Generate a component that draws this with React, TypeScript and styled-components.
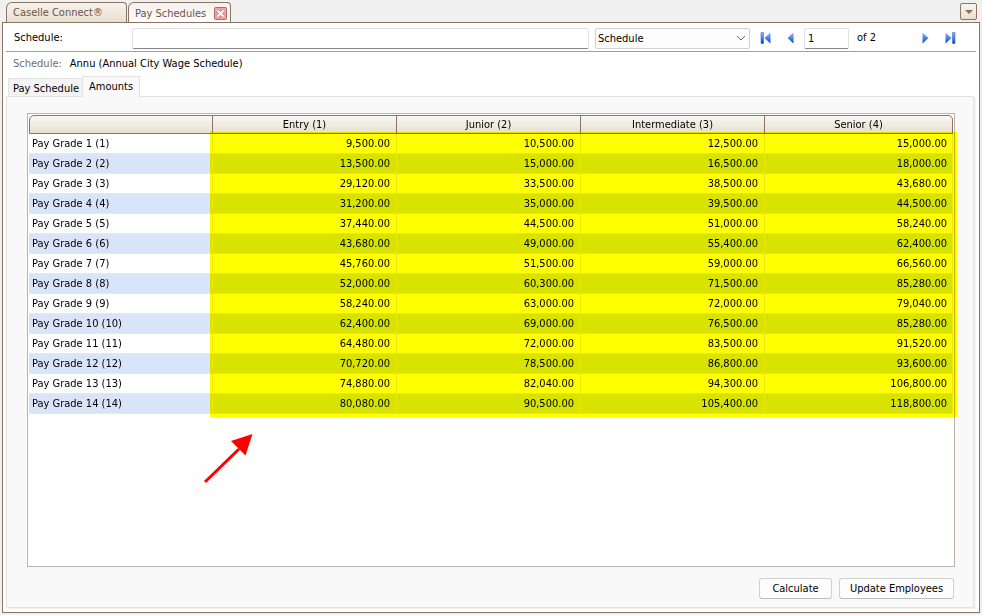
import React from 'react';
import styled, { createGlobalStyle, css } from 'styled-components';

const BROWN = '#8c7364';

const GlobalStyle = createGlobalStyle`
  *, *::before, *::after { box-sizing: border-box; }
  body {
    margin: 0;
    background: #f0f0f0;
    color: #000;
    font: 11px/14px Tahoma, "DejaVu Sans Condensed", "DejaVu Sans", sans-serif;
  }
  button, input, select { font: inherit; color: inherit; }
`;

const Window = styled.div`
  min-height: 100vh;
  display: flex;
  flex-direction: column;
  padding: 2px;
`;

const TabStrip = styled.header`
  display: flex;
  align-items: flex-end;
  height: 20px;
  padding: 0 3px 0 4px;
`;

const DocumentTab = styled.div<{ $active?: boolean; $width: number }>`
  display: flex;
  align-items: center;
  justify-content: space-between;
  width: ${p => p.$width}px;
  height: ${p => (p.$active ? 21 : 20)}px;
  padding: 1px 3px 0 6px;
  border: 1px solid ${BROWN};
  border-bottom: 0;
  border-radius: 6px 4px 0 0;
  background: ${p => (p.$active ? 'linear-gradient(#f4f0ee, #fff)' : 'linear-gradient(#f5f3ec, #e6e0cf)')};
  ${p => p.$active && css`margin: 0 0 -1px 1px;`}
`;

const TabTitle = styled.button`
  padding: 0;
  border: 0;
  background: none;
  color: #705148;
  white-space: nowrap;
`;

const CloseButton = styled.button`
  display: flex;
  padding: 0;
  border: 0;
  background: none;
`;

const TabMenuButton = styled.button`
  display: flex;
  align-items: center;
  justify-content: center;
  align-self: flex-start;
  width: 17px;
  height: 17px;
  margin: 1px 0 0 auto;
  padding: 0;
  border: 1px solid ${BROWN};
  border-radius: 2px;
  background: linear-gradient(#f8f6f0, #e6e0cf);
`;

const Frame = styled.main`
  flex: 1;
  display: flex;
  flex-direction: column;
  padding: 0 3px 4px;
  border: 1px solid ${BROWN};
  background: #fff;
`;

const Toolbar = styled.div`
  display: flex;
  align-items: center;
  height: 29px;
  padding: 2px 20px 0 8px;
  border-bottom: 1px solid #a0a0a0;
`;

const FieldLabel = styled.label`
  width: 118px;
`;

const TextBox = styled.input<{ $page?: boolean }>`
  ${p => (p.$page ? 'width: 45px;' : 'flex: 1; min-width: 0;')}
  height: 21px;
  padding: 0 3px;
  border: 1px solid #e2e2e2;
  border-bottom-color: #858585;
  border-radius: 2px;
  background: #fff;
`;

const SelectBox = styled.div`
  display: grid;
  align-items: center;
  width: 155px;
  margin: 0 10px 0 6px;
  > * { grid-area: 1 / 1; }
  > svg { justify-self: end; margin-right: 4px; pointer-events: none; }
`;

const Select = styled.select`
  appearance: none;
  width: 100%;
  height: 21px;
  padding: 1px 2px 0;
  border: 1px solid #d0d0d0;
  border-radius: 2px;
  background: #fdfdfd;
`;

const Pager = styled.nav`
  display: flex;
  align-items: center;
`;

const PagerButton = styled.button<{ $after?: number }>`
  display: flex;
  margin-right: ${p => p.$after ?? 0}px;
  padding: 0;
  border: 0;
  background: none;
`;

const PageCount = styled.span`
  width: 73px;
  padding-left: 8px;
`;

const RecordLine = styled.p`
  display: flex;
  gap: 8px;
  margin: 0;
  padding: 5px 7px 4px;
`;

const Muted = styled.span`
  color: #6f6f6f;
`;

const PageTabs = styled.div`
  display: flex;
  align-items: flex-end;
  height: 21px;
  padding: 0 2px;
`;

const PageTab = styled.button<{ $active?: boolean }>`
  height: ${p => (p.$active ? 21 : 18)}px;
  padding: ${p => (p.$active ? '0 6px 1px' : '2px 3px 0 4px')};
  border: 1px solid #e3e3e3;
  border-bottom: 0;
  white-space: nowrap;
  background: ${p => (p.$active ? '#f9f9f9' : '#f3f3f3')};
  ${p => p.$active && css`
    position: relative;
    margin: 0 0 -1px -1px;
  `}
`;

const Panel = styled.section`
  flex: 1;
  display: flex;
  flex-direction: column;
  margin-right: 2px;
  padding: 16px 18px 8px 20px;
  border: 1px solid #e3e3e3;
  background: #f9f9f9;
  box-shadow: 2px 1px 0 #f2f2f2;
`;

const GridBox = styled.div`
  position: relative;
  isolation: isolate;
  flex: 1;
  padding: 1px 1px 0 1px;
  border: 1px solid #bfb2a9;
  background: #fff;
`;

const Table = styled.table`
  width: 100%;
  table-layout: fixed;
  border-collapse: separate;
  border-spacing: 0;
`;

const HeadCell = styled.th`
  width: 184px;
  height: 19px;
  padding: 0;
  border: 1px solid ${BROWN};
  border-left-width: 0;
  background: linear-gradient(#f8f7f3, #e6e0cf);
  font-weight: normal;
  &:first-child { border-left-width: 1px; border-top-left-radius: 5px; }
  &:last-child { width: auto; border-top-right-radius: 5px; }
`;

const Row = styled.tr`
  &:nth-child(even) { background: #d8e4f7; }
`;

const cell = css`
  height: 20px;
  border-right: 1px solid #ece9d8;
  border-bottom: 1px solid #ece9d8;
`;

const RowHead = styled.th`
  ${cell}
  padding: 0 3px;
  font-weight: normal;
  text-align: left;
`;

const Amount = styled.td`
  ${cell}
  padding: 0 6px;
  text-align: right;
  &:last-child { padding-right: 5px; }
`;

const Highlight = styled.div`
  position: absolute;
  top: 18px;
  left: 182px;
  right: -3px;
  height: 285px;
  background: #ff0;
  mix-blend-mode: multiply;
  pointer-events: none;
`;

const Arrow = styled.svg`
  position: absolute;
  top: 319px;
  left: 175px;
`;

const Actions = styled.footer`
  display: flex;
  justify-content: flex-end;
  gap: 7px;
  padding: 11px 1px 0 0;
`;

const ActionButton = styled.button<{ $width: number }>`
  width: ${p => p.$width}px;
  height: 21px;
  padding: 1px 0 0;
  border: 1px solid #d0d0d0;
  border-bottom-color: #bcbcbc;
  border-radius: 3px;
  background: #fdfdfd;
  white-space: nowrap;
`;

const columns = ['Entry (1)', 'Junior (2)', 'Intermediate (3)', 'Senior (4)'];

const grades = [
  ['9,500.00', '10,500.00', '12,500.00', '15,000.00'],
  ['13,500.00', '15,000.00', '16,500.00', '18,000.00'],
  ['29,120.00', '33,500.00', '38,500.00', '43,680.00'],
  ['31,200.00', '35,000.00', '39,500.00', '44,500.00'],
  ['37,440.00', '44,500.00', '51,000.00', '58,240.00'],
  ['43,680.00', '49,000.00', '55,400.00', '62,400.00'],
  ['45,760.00', '51,500.00', '59,000.00', '66,560.00'],
  ['52,000.00', '60,300.00', '71,500.00', '85,280.00'],
  ['58,240.00', '63,000.00', '72,000.00', '79,040.00'],
  ['62,400.00', '69,000.00', '76,500.00', '85,280.00'],
  ['64,480.00', '72,000.00', '83,500.00', '91,520.00'],
  ['70,720.00', '78,500.00', '86,800.00', '93,600.00'],
  ['74,880.00', '82,040.00', '94,300.00', '106,800.00'],
  ['80,080.00', '90,500.00', '105,400.00', '118,800.00'],
];

function PagerIcon({ back, bar }: { back?: boolean; bar?: boolean }) {
  const width = bar ? 11 : 7;
  return (
    <svg width={width} height="12" viewBox={`0 0 ${width} 12`}>
      <defs>
        <linearGradient id="pagerBlue" x1="0" y1="0" x2="0" y2="1">
          <stop offset="0" stopColor="#8dbcf6" />
          <stop offset="0.5" stopColor="#4a86ea" />
          <stop offset="1" stopColor="#0a3cb8" />
        </linearGradient>
      </defs>
      <g transform={back ? `matrix(-1 0 0 1 ${width} 0)` : undefined} fill="url(#pagerBlue)">
        <path d="M.5.5 6.500 6 .5 11.500z" />
        {bar && <path d="M7.500.5h2.500v11H7.500z" stroke="#2556b8" strokeWidth="0.5" />}
      </g>
    </svg>
  );
}

export default function App() {
  return (
    <>
      <GlobalStyle />
      <Window>
        <TabStrip>
          <DocumentTab $width={121}>
            <TabTitle>Caselle Connect®</TabTitle>
          </DocumentTab>
          <DocumentTab $active $width={103}>
            <TabTitle>Pay Schedules</TabTitle>
            <CloseButton aria-label="Close Pay Schedules">
              <svg width="13" height="13" viewBox="0 0 13 13">
                <rect x=".5" y=".5" width="12" height="12" rx="1" fill="#f3a3a3" stroke="#a86f69" />
                <path d="m3.500 3.500 6 6m0-6-6 6" stroke="#e0686a" strokeWidth="3.400" />
                <path d="m3.500 3.500 6 6m0-6-6 6" stroke="#fff" strokeWidth="2" />
              </svg>
            </CloseButton>
          </DocumentTab>
          <TabMenuButton aria-label="Open tab list">
            <svg width="8" height="4" viewBox="0 0 8 4"><path d="M0 0h8L4 4z" fill="#8c6d5c" /></svg>
          </TabMenuButton>
        </TabStrip>

        <Frame>
          <Toolbar>
            <FieldLabel htmlFor="schedule">Schedule:</FieldLabel>
            <TextBox id="schedule" type="text" />
            <SelectBox>
              <Select aria-label="Search by" defaultValue="Schedule">
                <option>Schedule</option>
              </Select>
              <svg width="10" height="6" viewBox="0 0 10 6" fill="none" stroke="#606060"><path d="m1 1 4 4 4-4" /></svg>
            </SelectBox>
            <Pager aria-label="Records">
              <PagerButton $after={16} aria-label="First"><PagerIcon back bar /></PagerButton>
              <PagerButton $after={10} aria-label="Previous"><PagerIcon back /></PagerButton>
              <TextBox $page aria-label="Current record" defaultValue="1" />
              <PageCount>of 2</PageCount>
              <PagerButton $after={16} aria-label="Next"><PagerIcon /></PagerButton>
              <PagerButton aria-label="Last"><PagerIcon bar /></PagerButton>
            </Pager>
          </Toolbar>

          <RecordLine>
            <Muted>Schedule:</Muted>
            <span>Annu (Annual City Wage Schedule)</span>
          </RecordLine>

          <PageTabs role="tablist">
            <PageTab role="tab" aria-selected={false}>Pay Schedule</PageTab>
            <PageTab role="tab" aria-selected $active>Amounts</PageTab>
          </PageTabs>

          <Panel>
            <GridBox>
              <Table>
                <thead>
                  <tr>
                    <HeadCell aria-label="Pay grade" />
                    {columns.map(name => <HeadCell key={name} scope="col">{name}</HeadCell>)}
                  </tr>
                </thead>
                <tbody>
                  {grades.map((amounts, i) => (
                    <Row key={i}>
                      <RowHead scope="row">{`Pay Grade ${i + 1} (${i + 1})`}</RowHead>
                      {amounts.map((amount, j) => <Amount key={j}>{amount}</Amount>)}
                    </Row>
                  ))}
                </tbody>
              </Table>
              <Highlight />
              <Arrow width="52" height="52" viewBox="0 0 52 52">
                <path d="M2 49 36 16" stroke="#f00" strokeWidth="3" />
                <path d="M49.500 1 28 8 42.500 22.500z" fill="#f00" />
              </Arrow>
            </GridBox>
            <Actions>
              <ActionButton $width={73}>Calculate</ActionButton>
              <ActionButton $width={115}>Update Employees</ActionButton>
            </Actions>
          </Panel>
        </Frame>
      </Window>
    </>
  );
}
